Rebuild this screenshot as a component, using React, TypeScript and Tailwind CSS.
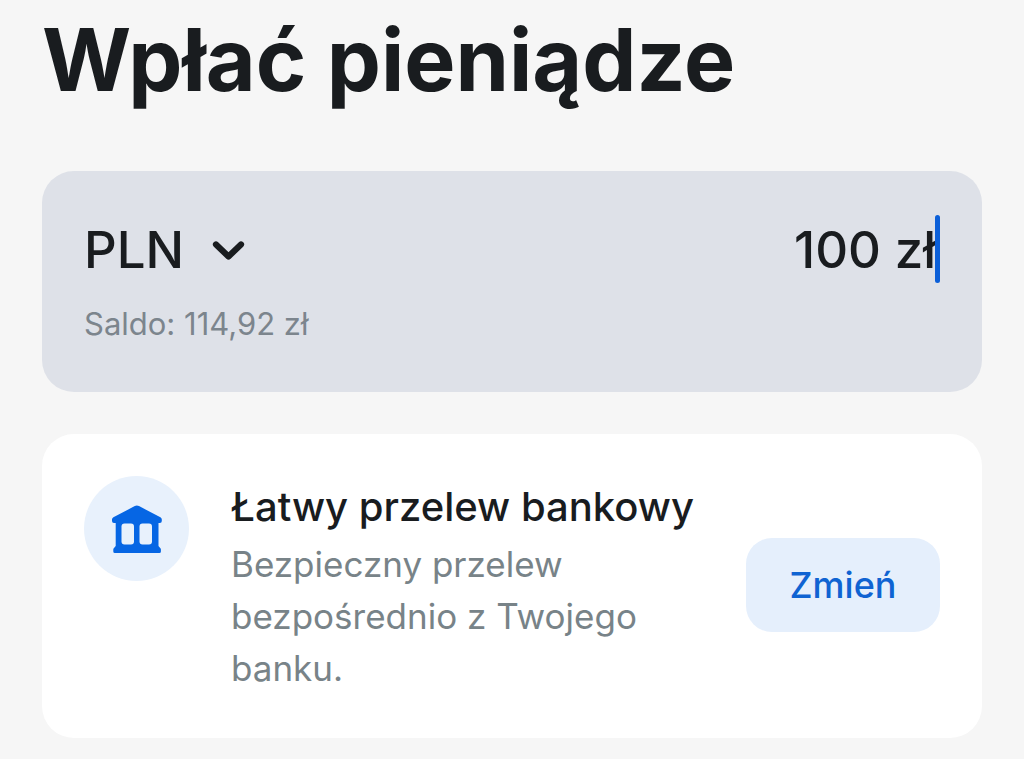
import { useState } from "react";

function ChevronDown() {
  return (
    <svg width="34" height="22" viewBox="0 0 34 22" fill="none" aria-hidden="true">
      <path d="M4 5.500L16.500 17.500L29 5.500" stroke="#191c1f" strokeWidth="6.200" strokeLinecap="round" strokeLinejoin="round" />
    </svg>
  );
}

function BankIcon() {
  return (
    <svg width="52" height="50" viewBox="0 0 52 50" fill="#0666e4" aria-hidden="true">
      <path d="M23.800 2.100a4.500 4.500 0 0 1 4.200 0L49.400 13.200a2.600 2.600 0 0 1 1.400 2.300V17a2 2 0 0 1-2 2H47.500V42L49.400 44.200a2 2 0 0 1 .5 1.300V47.500a1.500 1.500 0 0 1-1.500 1.500H3.800a1.500 1.500 0 0 1-1.500-1.500V45.500a2 2 0 0 1 .5-1.300L4.700 42V19H3a2 2 0 0 1-2-2V15.500a2.600 2.600 0 0 1 1.400-2.300Z" />
      <rect x="10.500" y="19.500" width="12.500" height="21" rx="3" fill="#e8f1fc" />
      <rect x="28.500" y="19.500" width="12.500" height="21" rx="3" fill="#e8f1fc" />
    </svg>
  );
}

export default function App() {
  const [amount, setAmount] = useState("100 zł");
  return (
    <main className="min-h-screen bg-[#f6f6f6] px-[42px] pt-3 pb-5 font-['Inter',sans-serif] text-[#191c1f]">
      <h1 className="text-[86px] leading-[96px] font-bold">Wpłać pieniądze</h1>

      <section className="mt-[63px] flex h-[221px] items-start justify-between rounded-[32px] bg-[#dee1e8] px-[42px] pt-11">
        <div>
          <button type="button" aria-label="Waluta: PLN" className="flex h-[70px] items-center gap-7 text-[51px] font-medium">
            PLN
            <ChevronDown />
          </button>
          <p className="mt-4 text-[31px] leading-[46px] text-[#7c858d]">Saldo: 114,92 zł</p>
        </div>
        <div className="relative">
          <input
            aria-label="Kwota"
            value={amount}
            onChange={(event) => setAmount(event.target.value)}
            className="h-[70px] w-[300px] bg-transparent pr-1 text-right text-[51px] font-medium caret-[#0b5fd8] outline-none"
          />
          <span className="absolute top-0 right-0 h-[68px] w-[5px] rounded-full bg-[#0b5fd8]" />
        </div>
      </section>

      <section className="mt-[42px] flex items-center gap-[42px] rounded-[32px] bg-white px-[42px] pt-[42px] pb-11">
        <div className="flex size-[105px] shrink-0 items-center justify-center self-start rounded-full bg-[#e8f1fc]">
          <BankIcon />
        </div>
        <div className="min-w-0 flex-1">
          <h2 className="text-[40px] leading-[62px] font-medium">Łatwy przelew bankowy</h2>
          <p className="max-w-[460px] text-[35px] leading-[52px] text-[#788388]">
            Bezpieczny przelew bezpośrednio z Twojego banku.
          </p>
        </div>
        <button type="button" className="h-[94px] w-[194px] shrink-0 rounded-[26px] bg-[#e5effc] text-[36px] font-medium text-[#0f63d2]">
          Zmień
        </button>
      </section>
    </main>
  );
}
